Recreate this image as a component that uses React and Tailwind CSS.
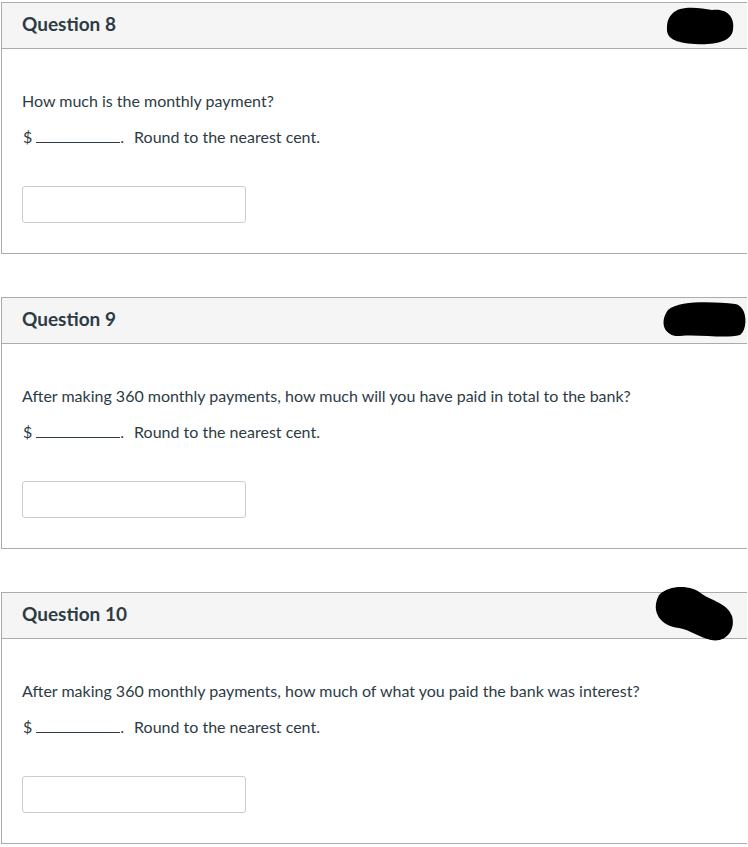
import React from "react";

const questions = [
  { n: 8, text: "How much is the monthly payment?" },
  { n: 9, text: "After making 360 monthly payments, how much will you have paid in total to the bank?" },
  { n: 10, text: "After making 360 monthly payments, how much of what you paid the bank was interest?" },
];

function Panel({ n, text }) {
  return (
    <div className="ml-px w-[746px] h-[252px] border-t border-l border-b border-[#ababab] flex flex-col">
      <div className="h-[46px] bg-[#f5f5f5] border-b border-[#ababab] flex items-center pl-[20px] pb-[5px]">
        <span className="text-[19px] font-bold text-[#2d3b45] leading-none">Question {n}</span>
      </div>
      <div className="flex-1 pl-[20px] pt-[41px] text-[16px] text-[#2d3b45]">
        <div className="leading-[22px]">{text}</div>
        <div className="leading-[22px] mt-[14px] flex items-end">
          <span className="ml-[1px]">$</span>
          <span className="ml-[4px] w-[84px] border-b border-[#2d3b45] mb-[5px]"></span>
          <span>.</span>
          <span className="ml-[10px]">Round to the nearest cent.</span>
        </div>
        <div className="mt-[38px] w-[224px] h-[37px] border border-[#c7cdd1] rounded-[3px] bg-white"></div>
      </div>
    </div>
  );
}

export default function App() {
  return (
    <div
      className="relative w-[748px] h-[847px] bg-white pt-[2px] flex flex-col gap-[43px]"
      style={{ fontFamily: "Lato, 'Open Sans', sans-serif" }}
    >
      {questions.map((q) => (
        <Panel key={q.n} {...q} />
      ))}
      <svg className="absolute left-0 top-0 pointer-events-none" width="748" height="847" viewBox="0 0 748 847">
        <path d="M672 14 C680 5 700 8 712 10 C728 8 735 18 733 30 C731 42 715 45 695 44 C675 43 666 38 667 28 C667 21 669 17 672 14 Z" fill="#000" />
        <path d="M668 310 C680 300 715 302 735 304 C748 306 748 330 740 335 C725 339 700 334 680 336 C664 337 659 322 668 310 Z" fill="#000" />
        <path d="M659 595 C670 584 692 585 702 594 C712 601 727 603 732 616 C736 630 726 643 711 640 C699 637 690 630 679 628 C661 626 650 612 659 595 Z" fill="#000" />
      </svg>
    </div>
  );
}
